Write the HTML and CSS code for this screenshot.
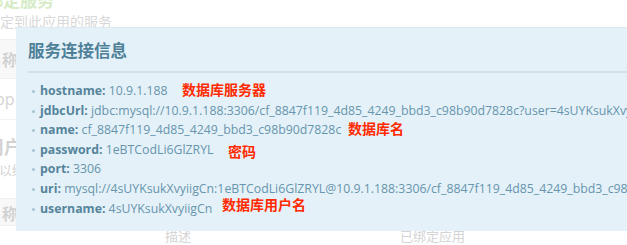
FILE: index.html
```html
<!DOCTYPE html>
<html lang="zh">
<head>
<meta charset="utf-8">
<link rel="stylesheet" href="styles.css">
</head>
<body>
<div class="page">
  <div class="bg">
    <div class="bg-title">绑定服务</div>
    <div class="bg-sub">绑定到此应用的服务</div>
    <div class="bg-row grey"><span class="bold">名称</span></div>
    <div class="bg-row white"><span>app</span></div>
    <div class="bg-sec"><div class="bold big">用户服务</div><div class="bg-sub2">可以绑定</div></div>
    <div class="bg-row grey short"><span class="bold">名称</span></div>
    <div class="bg-foot"><span class="c1">描述</span><span class="c2">已绑定应用</span></div>
  </div>
  <div class="modal">
    <h3 class="modal-title">服务连接信息</h3>
    <ul class="info">
      <li><b>hostname:</b> 10.9.1.188<span class="note n1">数据库服务器</span></li>
      <li><b>jdbcUrl:</b> jdbc:mysql://10.9.1.188:3306/cf_8847f119_4d85_4249_bbd3_c98b90d7828c?user=4sUYKsukXvyiigCn&amp;password=1eBTCodLi6GlZRYL</li>
      <li><b>name:</b> cf_8847f119_4d85_4249_bbd3_c98b90d7828c<span class="note n2">数据库名</span></li>
      <li><b>password:</b> 1eBTCodLi6GlZRYL<span class="note n3">密码</span></li>
      <li><b>port:</b> 3306</li>
      <li><b>uri:</b> mysql://4sUYKsukXvyiigCn:1eBTCodLi6GlZRYL@10.9.1.188:3306/cf_8847f119_4d85_4249_bbd3_c98b90d7828c?reconnect=true</li>
      <li><b>username:</b> 4sUYKsukXvyiigCn<span class="note n4">数据库用户名</span></li>
    </ul>
  </div>
</div>
</body>
</html>
```
FILE: styles.css
```css
html, body {
  margin: 0;
  padding: 0;
  background: #ffffff;
  overflow: hidden;
}
body {
  width: 627px;
  height: 245px;
  font-family: "Open Sans", "Noto Sans CJK SC", sans-serif;
}
.page {
  position: relative;
  width: 627px;
  height: 245px;
  overflow: hidden;
}
.bg {
  margin-left: -14px;
  color: #d4d4d4;
  font-size: 13px;
}
.bg-title {
  margin-top: -8px;
  height: 18px;
  line-height: 18px;
  font-size: 17px;
  font-weight: bold;
  color: #d6ecc6;
}
.bg-sub {
  height: 20px;
  line-height: 20px;
  margin-top: 2px;
  color: #d8d8d8;
  font-size: 14px;
}
.bg-row {
  display: flex;
  align-items: center;
}
.bg-row.grey {
  margin-top: 7px;
  height: 38px;
  background: #f8f8f8;
  border-top: 1px solid #f0f0f0;
  border-bottom: 1px solid #f0f0f0;
}
.bg-row.white {
  height: 40px;
  font-size: 16px;
  border-bottom: 1px solid #f2f2f2;
}
.bold { font-weight: bold; font-size: 16px; color: #d2d2d2; }
.bg-sec { height: 78px; padding-top: 16px; box-sizing: border-box; }
.bg-sec .big { font-size: 18px; line-height: 22px; }
.bg-sub2 { font-size: 13px; margin-top: 2px; }
.bg-row.short { margin-top: 0; height: 26px; align-items: flex-end; }
.bg-foot { position: relative; height: 20px; }
.bg-foot .c1 { position: absolute; left: 179px; top: 0; }
.bg-foot .c2 { position: absolute; left: 414px; top: 0; }

.modal {
  position: absolute;
  left: 16px;
  top: 27px;
  width: 640px;
  height: 204px;
  background: #e4f1f8;
  border-top: 1px solid #dfe8ee;
  box-sizing: border-box;
  padding: 0 0 0 12px;
  color: #6795ad;
  white-space: nowrap;
}
.modal-title {
  margin: 0;
  height: 43px;
  line-height: 45px;
  font-size: 16.5px;
  font-weight: bold;
  color: #4e8098;
  border-bottom: 2px solid #d6dfe3;
  font-family: "Noto Sans CJK SC", sans-serif;
}
.info {
  list-style: none;
  margin: 0;
  padding: 8px 0 0 0;
  font-size: 12.3px;
}
.info li {
  position: relative;
  height: 19.6px;
  line-height: 19.6px;
  padding-left: 12px;
}
.info li::before {
  content: "";
  position: absolute;
  left: 4px;
  top: 9px;
  width: 3px;
  height: 3px;
  border-radius: 50%;
  background: #a7c4d3;
}
.info b { color: #55849b; }
.note {
  position: absolute;
  color: #ff2a00;
  font-weight: bold;
  font-size: 14px;
  line-height: 16px;
  font-family: "Noto Sans CJK SC", sans-serif;
}
.n1 { left: 154px; top: 0; }
.n2 { left: 320px; top: 0; }
.n3 { left: 200px; top: 3px; }
.n4 { left: 194px; top: -3px; }
```
